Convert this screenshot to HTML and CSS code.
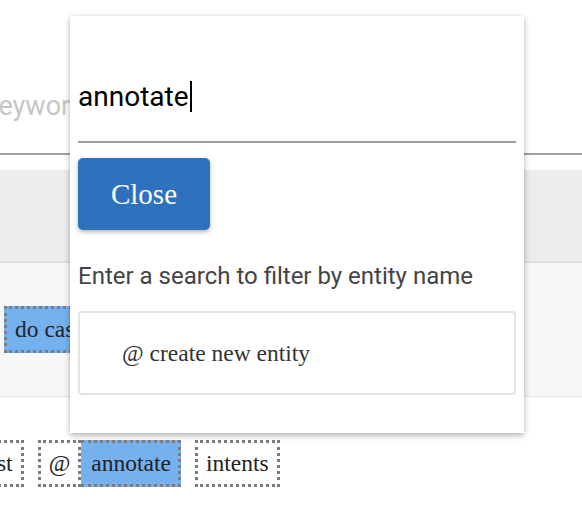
FILE: index.html
```html
<!DOCTYPE html>
<html lang="en">
<head>
<meta charset="utf-8">
<title>Entity picker</title>
<link rel="stylesheet" href="styles.css">
</head>
<body>
<div class="page">
  <div class="search"><span class="search-text">keywords</span></div>
  <div class="band"></div>
  <div class="rows">
    <span class="tag tag-sel">do case search</span>
  </div>
  <div class="tokens">
    <span class="tag tag-gap">test</span>
    <span class="tag tag-at">@</span>
    <span class="tag tag-sel tag-joined tag-gap">annotate</span>
    <span class="tag">intents</span>
  </div>
</div>

<div class="picker">
  <div class="picker-input"><span class="picker-value">annotate</span><span class="caret"></span></div>
  <button class="close-btn" type="button">Close</button>
  <p class="hint">Enter a search to filter by entity name</p>
  <div class="option">@ create new entity</div>
</div>
</body>
</html>
```

FILE: styles.css
```css
html, body {
  margin: 0;
  padding: 0;
  background: #ffffff;
  overflow: hidden;
}

body {
  width: 582px;
  height: 508px;
  position: relative;
  font-family: "Liberation Serif", "Times New Roman", serif;
}

.page {
  display: flex;
  flex-direction: column;
}

.search {
  padding: 91px 0 32px 0;
  border-bottom: 2px solid #a0a0a0;
  font-family: Roboto, "Liberation Sans", sans-serif;
  font-size: 27px;
  line-height: 30px;
  color: #c6c6c6;
  white-space: nowrap;
}

.search-text {
  display: inline-block;
  margin-left: -15px;
}

.band {
  margin-top: 15px;
  height: 91px;
  background: #ececec;
  border-bottom: 2px solid #dedede;
}

.rows {
  height: 133px;
  background: #f7f7f7;
  border-bottom: 1px solid #e4e4e4;
  display: flex;
  align-items: center;
  padding-left: 4px;
  white-space: nowrap;
}

.tag {
  display: inline-block;
  border: 3px dotted #7c7c7c;
  padding: 7px 8px;
  font-size: 23.5px;
  line-height: 27px;
  color: #222222;
  white-space: nowrap;
  background: #ffffff;
}

.tag-sel {
  background: #75b1ee;
}

.tokens {
  margin-top: 43px;
  margin-left: -31px;
  display: flex;
}

.tag-gap {
  margin-right: 14px;
}

.tag-joined {
  border-left: none;
  padding-left: 10px;
  padding-right: 7px;
}

/* overlay picker */
.picker {
  position: absolute;
  left: 70px;
  top: 16px;
  width: 454px;
  height: 417px;
  box-sizing: border-box;
  padding: 0 8px;
  background: #ffffff;
  box-shadow: 0 3px 6px rgba(0, 0, 0, 0.24), 0 0 5px rgba(0, 0, 0, 0.10);
  display: flex;
  flex-direction: column;
  align-items: flex-start;
}

.picker-input {
  align-self: stretch;
  padding: 64px 0 28px 0;
  border-bottom: 2px solid #9e9e9e;
  font-family: Roboto, "Liberation Sans", sans-serif;
  font-size: 28px;
  line-height: 33px;
  color: #000000;
  display: flex;
  align-items: center;
}

.caret {
  display: inline-block;
  width: 2px;
  height: 31px;
  margin-left: 1px;
  background: #000000;
}

.close-btn {
  margin-top: 15px;
  width: 132px;
  height: 72px;
  border: none;
  border-radius: 5px;
  background: #2e72be;
  color: #ffffff;
  font-family: "Liberation Serif", "Times New Roman", serif;
  font-size: 29px;
  box-shadow: 0 2px 4px rgba(0, 0, 0, 0.3);
  padding: 0;
}

.hint {
  margin: 32px 0 0 0;
  font-family: Roboto, "Liberation Sans", sans-serif;
  font-size: 24px;
  line-height: 28px;
  color: #444444;
}

.option {
  margin-top: 21px;
  align-self: stretch;
  height: 84px;
  box-sizing: border-box;
  border: 2px solid #e2e2e2;
  border-radius: 4px;
  padding-left: 42px;
  display: flex;
  align-items: center;
  font-size: 23.5px;
  color: #333333;
}
```
